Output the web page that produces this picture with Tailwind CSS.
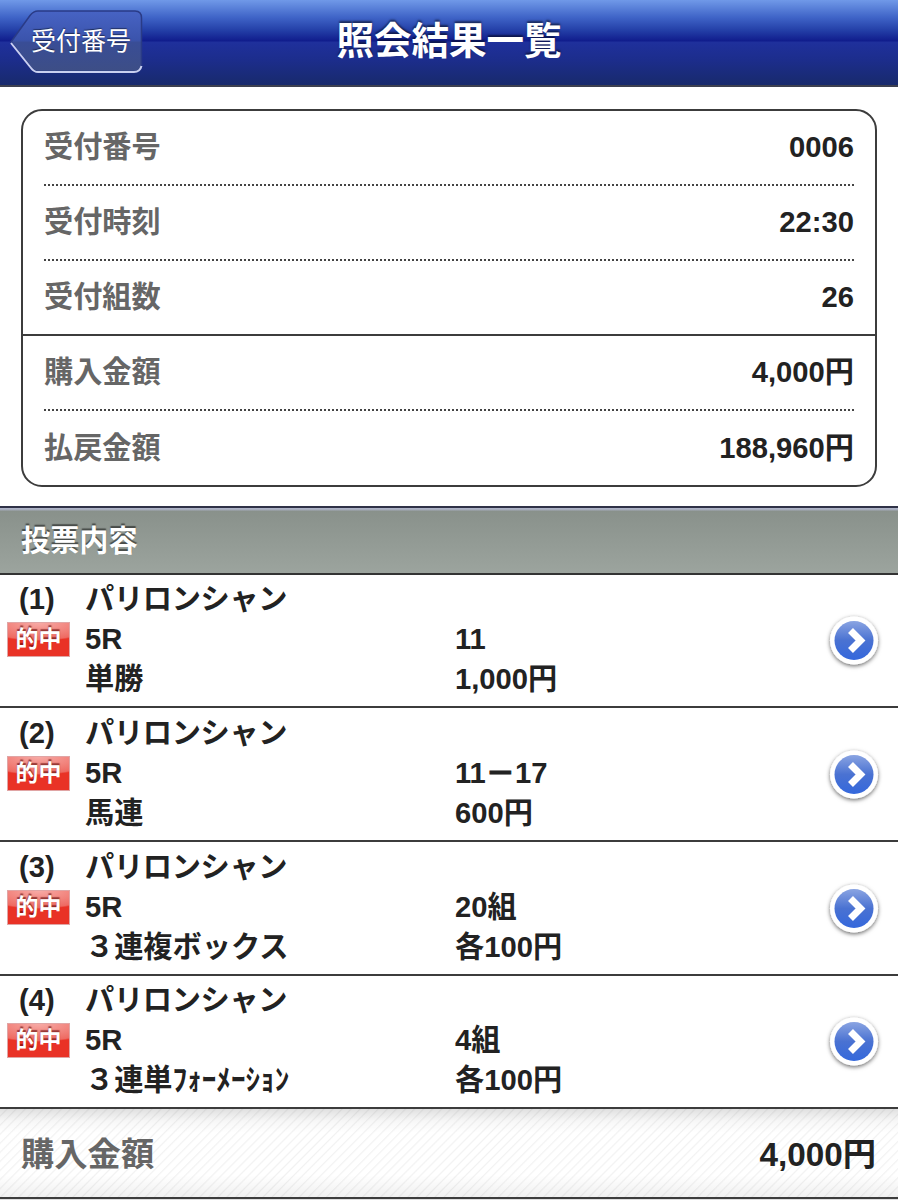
<!DOCTYPE html>
<html lang="ja">

<head>
  <meta charset="UTF-8">
  <meta name="viewport" content="width=device-width, initial-scale=1.0">
  <title>照会結果一覧</title>
  <script src="https://cdn.jsdelivr.net/npm/@tailwindcss/browser@4"></script>
</head>

<body class="bg-white text-[#222] antialiased font-bold text-[29.2px] leading-[40px] font-['Liberation_Sans','Noto_Sans_CJK_JP',sans-serif]">

  <!-- header -->
  <header class="relative h-[87px] pb-[4px] flex items-center justify-center border-b-2 border-[#3d4050] bg-[linear-gradient(to_bottom,#7099e8_0px,#4065c8_17px,#2440a8_30px,#101c8c_41px,#1f309c_42px,#1c2d8c_60px,#182a6c_85px)]">
    <a href="#" class="absolute left-[10px] top-[10px] w-[133px] h-[64px]">
      <svg class="absolute inset-0" width="133" height="64" viewBox="0 0 133 64">
        <defs>
          <linearGradient id="back" x1="0" y1="0" x2="0" y2="1">
            <stop offset="0" stop-color="#4763c4" />
            <stop offset="0.48" stop-color="#3b54ac" />
            <stop offset="0.52" stop-color="#394d96" />
            <stop offset="1" stop-color="#3d4e86" />
          </linearGradient>
        </defs>
        <path d="M1 32 L20 5.500 Q23.500 1 28 1 H125 Q131.500 1 131.500 8 V55 Q131.500 61.500 125 61.500 H28 Q24 61.500 21 57.500 Z" fill="url(#back)" stroke="#2a3b86" stroke-width="1.500" />
        <path d="M1 33 L21 58 Q24 62 28 62 H124 Q130 62 131.500 56" fill="none" stroke="#c9cff0" stroke-width="2" />
      </svg>
      <span class="absolute left-[21px] top-[11px] whitespace-nowrap text-[25px] font-normal text-white [text-shadow:0_-1px_1px_rgba(0,0,0,0.5)]">受付番号</span>
    </a>
    <h1 class="text-[37.5px] text-white [text-shadow:0_-2px_2px_rgba(0,0,0,0.5)]">照会結果一覧</h1>
  </header>

  <!-- summary -->
  <dl class="mt-[22px] mx-[21px] h-[378px] border-2 border-[#3c3c3c] rounded-[21px]">
    <div class="mx-[21px] h-[75px] pb-[2px] flex items-center justify-between border-b-2 border-dotted border-[#444]">
      <dt class="text-[#666]">受付番号</dt>
      <dd>0006</dd>
    </div>
    <div class="mx-[21px] h-[75px] pb-[2px] flex items-center justify-between border-b-2 border-dotted border-[#444]">
      <dt class="text-[#666]">受付時刻</dt>
      <dd>22:30</dd>
    </div>
    <div class="px-[21px] h-[75px] pb-[2px] flex items-center justify-between border-b-2 border-[#3c3c3c]">
      <dt class="text-[#666]">受付組数</dt>
      <dd>26</dd>
    </div>
    <div class="mx-[21px] h-[75px] pb-[2px] flex items-center justify-between border-b-2 border-dotted border-[#444]">
      <dt class="text-[#666]">購入金額</dt>
      <dd>4,000円</dd>
    </div>
    <div class="mx-[21px] h-[74px] flex items-center justify-between">
      <dt class="text-[#666]">払戻金額</dt>
      <dd>188,960円</dd>
    </div>
  </dl>

  <!-- section title -->
  <h2 class="mt-[19px] h-[69px] pl-[21px] flex items-center border-t-2 border-b-2 border-t-[#2f3247] border-b-[#333] bg-[linear-gradient(to_bottom,#b0b5cc_0px,#a4aab8_2px,#89918b_3px,#9ca49e_65px)] text-white [text-shadow:0_-2px_1px_rgba(0,0,0,0.5)]">投票内容</h2>

  <!-- bets -->
  <ul>
    <li class="h-[133px] pt-[4px] pr-[18px] flex border-b-2 border-[#3c3c3c]">
      <div class="w-[85px] flex flex-col">
        <span class="pl-[19px]">(1)</span>
        <span class="ml-[7px] mt-[3px] w-[63px] h-[35px] border border-[#e0a5a5] text-center text-[23px] leading-[32px] text-white bg-[radial-gradient(ellipse_60px_18px_at_50%_0,#f7aaa5_0%,#ee6a62_92%,#e93226_100%)] [text-shadow:0_-2px_1px_rgba(90,0,0,0.6)]">的中</span>
      </div>
      <div class="w-[370px]">
        <p class="tracking-[-0.3px]">パリロンシャン</p>
        <p>5R</p>
        <p>単勝</p>
      </div>
      <div class="flex-1 pt-[40px]">
        <p>11</p>
        <p>1,000円</p>
      </div>
      <svg class="self-center -mt-[4px] overflow-visible" width="52" height="56" viewBox="0 0 52 56">
        <defs>
          <linearGradient id="arrow" x1="0" y1="0" x2="0" y2="1">
            <stop offset="0" stop-color="#8aa4e2" />
            <stop offset="0.5" stop-color="#4a72d2" />
            <stop offset="1" stop-color="#3468dc" />
          </linearGradient>
          <filter id="shade" x="-20%" y="-20%" width="150%" height="150%">
            <feDropShadow dx="0" dy="1.500" stdDeviation="2" flood-color="#000" flood-opacity="0.6" />
          </filter>
        </defs>
        <circle cx="26" cy="27.500" r="24" fill="#fff" filter="url(#shade)" />
        <circle cx="26" cy="27.500" r="19.500" fill="url(#arrow)" />
        <path d="M22.500 17.500 L32.500 27.500 L22.500 37.500" fill="none" stroke="#fff" stroke-width="7" />
      </svg>
    </li>
    <li class="h-[134px] pt-[5px] pr-[18px] flex border-b-2 border-[#3c3c3c]">
      <div class="w-[85px] flex flex-col">
        <span class="pl-[19px]">(2)</span>
        <span class="ml-[7px] mt-[3px] w-[63px] h-[35px] border border-[#e0a5a5] text-center text-[23px] leading-[32px] text-white bg-[radial-gradient(ellipse_60px_18px_at_50%_0,#f7aaa5_0%,#ee6a62_92%,#e93226_100%)] [text-shadow:0_-2px_1px_rgba(90,0,0,0.6)]">的中</span>
      </div>
      <div class="w-[370px]">
        <p class="tracking-[-0.3px]">パリロンシャン</p>
        <p>5R</p>
        <p>馬連</p>
      </div>
      <div class="flex-1 pt-[40px]">
        <p>11<span class="[-webkit-text-stroke:1px_#222]">－</span>17</p>
        <p>600円</p>
      </div>
      <svg class="self-center -mt-[4px] overflow-visible" width="52" height="56" viewBox="0 0 52 56">
        <circle cx="26" cy="27.500" r="24" fill="#fff" filter="url(#shade)" />
        <circle cx="26" cy="27.500" r="19.500" fill="url(#arrow)" />
        <path d="M22.500 17.500 L32.500 27.500 L22.500 37.500" fill="none" stroke="#fff" stroke-width="7" />
      </svg>
    </li>
    <li class="h-[134px] pt-[5px] pr-[18px] flex border-b-2 border-[#3c3c3c]">
      <div class="w-[85px] flex flex-col">
        <span class="pl-[19px]">(3)</span>
        <span class="ml-[7px] mt-[3px] w-[63px] h-[35px] border border-[#e0a5a5] text-center text-[23px] leading-[32px] text-white bg-[radial-gradient(ellipse_60px_18px_at_50%_0,#f7aaa5_0%,#ee6a62_92%,#e93226_100%)] [text-shadow:0_-2px_1px_rgba(90,0,0,0.6)]">的中</span>
      </div>
      <div class="w-[370px]">
        <p class="tracking-[-0.3px]">パリロンシャン</p>
        <p>5R</p>
        <p>３連複ボックス</p>
      </div>
      <div class="flex-1 pt-[40px]">
        <p>20組</p>
        <p>各100円</p>
      </div>
      <svg class="self-center -mt-[4px] overflow-visible" width="52" height="56" viewBox="0 0 52 56">
        <circle cx="26" cy="27.500" r="24" fill="#fff" filter="url(#shade)" />
        <circle cx="26" cy="27.500" r="19.500" fill="url(#arrow)" />
        <path d="M22.500 17.500 L32.500 27.500 L22.500 37.500" fill="none" stroke="#fff" stroke-width="7" />
      </svg>
    </li>
    <li class="h-[133px] pt-[4px] pr-[18px] flex border-b-2 border-[#3c3c3c]">
      <div class="w-[85px] flex flex-col">
        <span class="pl-[19px]">(4)</span>
        <span class="ml-[7px] mt-[3px] w-[63px] h-[35px] border border-[#e0a5a5] text-center text-[23px] leading-[32px] text-white bg-[radial-gradient(ellipse_60px_18px_at_50%_0,#f7aaa5_0%,#ee6a62_92%,#e93226_100%)] [text-shadow:0_-2px_1px_rgba(90,0,0,0.6)]">的中</span>
      </div>
      <div class="w-[370px]">
        <p class="tracking-[-0.3px]">パリロンシャン</p>
        <p>5R</p>
        <p>３連単ﾌｫｰﾒｰｼｮﾝ</p>
      </div>
      <div class="flex-1 pt-[40px]">
        <p>4組</p>
        <p>各100円</p>
      </div>
      <svg class="self-center -mt-[4px] overflow-visible" width="52" height="56" viewBox="0 0 52 56">
        <circle cx="26" cy="27.500" r="24" fill="#fff" filter="url(#shade)" />
        <circle cx="26" cy="27.500" r="19.500" fill="url(#arrow)" />
        <path d="M22.500 17.500 L32.500 27.500 L22.500 37.500" fill="none" stroke="#fff" stroke-width="7" />
      </svg>
    </li>
  </ul>

  <!-- total -->
  <footer class="h-[90px] pt-[4px] pl-[21px] pr-[22px] flex items-center justify-between border-b-2 border-[#3c3c3c] text-[33.3px] bg-[linear-gradient(to_bottom,rgba(0,0,0,0.12)_0px,rgba(0,0,0,0.03)_12px,transparent_24px,transparent_66px,rgba(0,0,0,0.06)_88px),repeating-linear-gradient(135deg,#fff_0px,#fff_4px,#f2f2f2_5px,#fff_6.4px)]">
    <span class="text-[#666]">購入金額</span>
    <span>4,000円</span>
  </footer>
  <div class="h-px bg-[#ddd]"></div>

</body>

</html>
